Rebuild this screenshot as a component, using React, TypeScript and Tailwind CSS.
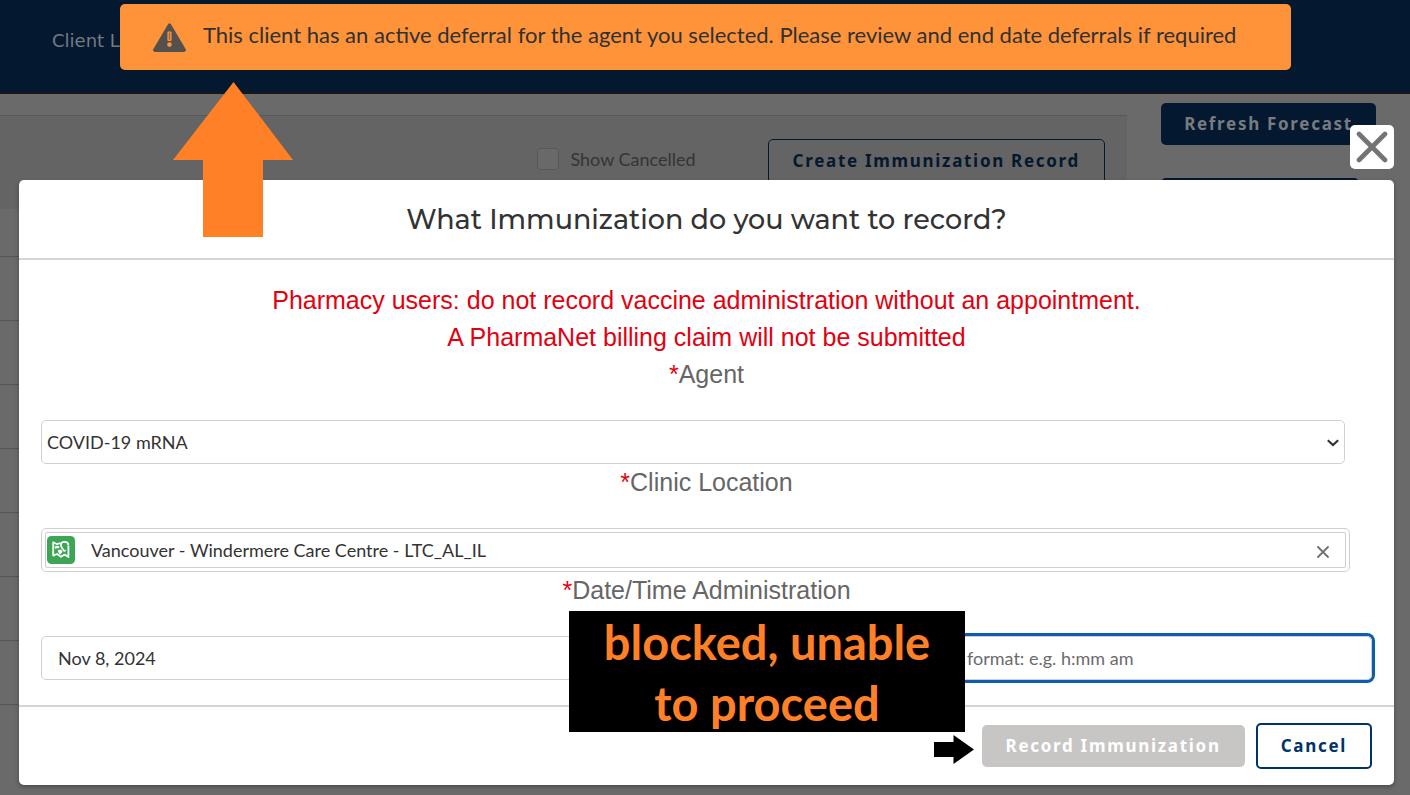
import React from "react";

const rows = ["a", "b", "c", "d", "e", "f", "g"];

function Background() {
  return (
    <div className="flex min-h-screen flex-col bg-[#6a6a6a]">
      <header className="flex h-[94px] items-center border-b-2 border-[#1a1718] bg-[#04182f] pb-[10px] pl-[52px]">
        <a href="#clients" className="font-['DejaVu_Sans',sans-serif] text-lg text-[#757b84]">
          Client List
        </a>
      </header>
      <div className="flex flex-1">
        <main className="min-w-0 flex-1 pt-[21px]">
          <div className="flex h-[94px] items-start justify-end border-t border-[#585858] bg-[#646464] pt-[23px] pr-[22px]">
            <label className="mt-2 mr-[72px] flex items-center gap-[11px] text-lg leading-6 text-[#343434]">
              <input
                type="checkbox"
                className="size-[22px] appearance-none rounded-sm border border-[#585858] bg-[#696969]"
              />
              Show Cancelled
            </label>
            <button
              type="button"
              className="h-[46px] rounded-[5px] border border-[#04182f] px-6 pb-[2px] font-['Noto_Sans',sans-serif] text-[17px] font-bold tracking-widest text-[#04182f]"
            >
              Create Immunization Record
            </button>
          </div>
          <div className="h-12 border-b border-[#565656]" />
          {rows.map((row) => (
            <div key={row} className="h-16 border-b border-[#565656]" />
          ))}
        </main>
        <aside className="flex w-[283px] flex-col items-start gap-[33px] pt-[9px] pl-[34px]">
          <button
            type="button"
            className="h-[42px] w-[215px] rounded-[5px] bg-[#04182f] font-['Noto_Sans',sans-serif] text-[17px] font-bold tracking-widest text-[#787b7f]"
          >
            Refresh Forecast
          </button>
          <div className="h-[42px] w-[198px] rounded-[5px] bg-[#04182f]" />
        </aside>
      </div>
    </div>
  );
}

function Toast() {
  return (
    <div
      role="alert"
      className="absolute top-1 right-[119px] left-[120px] flex h-[66px] items-center gap-[17px] rounded-[5px] bg-[#ff9339] pl-[33px]"
    >
      <svg width="33" height="29" viewBox="0 0 33 29" className="shrink-0">
        <path
          d="M15.2 1.1 Q16.5 -.7 17.8 1.1 L32.6 26.1 Q33.5 28.4 31.2 29 H1.8 Q-.5 28.4 .4 26.1 Z"
          fill="#54504d"
        />
        <rect x="14.4" y="8.4" width="4.2" height="9.6" rx="1" fill="#ff9339" />
        <rect x="15.8" y="9.6" width="1.4" height="7.2" fill="#8a6a4c" />
        <circle cx="16.5" cy="21.6" r="2.3" fill="#ff9339" />
      </svg>
      <p className="pb-1 text-[22px] leading-8 text-[#2f3132]">
        This client has an active deferral for the agent you selected. Please review and end date deferrals if required
      </p>
    </div>
  );
}

function FieldLabel({ htmlFor, children }: { htmlFor: string; children: React.ReactNode }) {
  return (
    <label
      htmlFor={htmlFor}
      className="mb-[27px] block text-center font-['Liberation_Sans',sans-serif] text-[25px] leading-[37px] text-[#666]"
    >
      <span className="text-[#e3000f]">*</span>
      {children}
    </label>
  );
}

function Dialog() {
  return (
    <div className="absolute inset-0 flex flex-col pt-[125px] pr-4 pl-[19px]">
      <button
        type="button"
        aria-label="Close"
        className="mb-[11px] flex size-11 shrink-0 items-center justify-center self-end rounded-[5px] bg-white"
      >
        <svg width="32" height="32" viewBox="0 0 32 32" stroke="#747474" strokeWidth="4.6" strokeLinecap="round">
          <path d="M3 3 L29 29 M29 3 L3 29" />
        </svg>
      </button>
      <section
        role="dialog"
        aria-labelledby="dialog-title"
        className="rounded-[5px] bg-white shadow-[0_2px_4px_rgba(0,0,0,0.3)]"
      >
        <div className="flex h-20 items-center justify-center border-b-2 border-[#d4d4d4]">
          <h1
            id="dialog-title"
            className="pt-[2px] font-['Montserrat','Inter',sans-serif] text-[27px] leading-9 font-medium text-[#333]"
          >
            What Immunization do you want to record?
          </h1>
        </div>
        <form className="px-[22px] pt-[22px] pb-[25px]" onSubmit={(e) => e.preventDefault()}>
          <p className="text-center font-['Liberation_Sans',sans-serif] text-[25px] leading-[37px] text-[#e3000f]">
            Pharmacy users: do not record vaccine administration without an appointment.
            <br />A PharmaNet billing claim will not be submitted
          </p>

          <FieldLabel htmlFor="agent">Agent</FieldLabel>
          <div className="relative mr-[27px]">
            <select
              id="agent"
              className="block h-11 w-full appearance-none rounded-[5px] border border-[#d0d0d0] bg-white pl-[5px] text-lg text-[#333]"
            >
              <option>COVID-19 mRNA</option>
            </select>
            <svg
              width="12"
              height="8"
              viewBox="0 0 12 8"
              fill="none"
              stroke="#333"
              strokeWidth="2.2"
              className="pointer-events-none absolute top-[19px] right-[6px]"
            >
              <path d="M.8 1.2 L6 6 L11.2 1.2" />
            </svg>
          </div>

          <FieldLabel htmlFor="clinic">Clinic Location</FieldLabel>
          <div className="mr-[22px] h-11 rounded-[5px] border border-[#d0d0d0] p-[3px]">
            <div className="flex h-9 items-center rounded-xs border border-[#cfcfcf] pr-[16px] pl-px">
              <svg width="28" height="28" viewBox="0 0 28 28" className="shrink-0">
                <rect width="28" height="28" rx="4.5" fill="#3ba755" />
                <path
                  d="M13.4 7 L10 8.2 L6.2 6.2 V19.6 L10 18 L14 20.8 L17.6 18.6 L21.4 21 V9.4"
                  fill="none"
                  stroke="#fff"
                  strokeWidth="1.8"
                  strokeLinejoin="round"
                />
                <path
                  d="M17.4 15.2 C15.6 12.8 13.9 11.2 13.9 9.2 C13.9 7.2 15.4 5.9 17.5 5.9 C19.6 5.9 21.3 7.2 21.3 9.2"
                  fill="none"
                  stroke="#fff"
                  strokeWidth="1.8"
                />
                <path d="M7.4 10.4 L10 9.8 L12.6 10.6 L11.6 12.4 L9.8 12 L8.6 13.2 Z" fill="#fff" />
                <path d="M10.6 14.4 L13 13.4 L15.4 14.6 L15 16.8 L13 18.6 L11.6 16.8 Z" fill="#fff" />
                <path d="M17.2 15.4 L18.8 14.2" stroke="#fff" strokeWidth="1.2" />
              </svg>
              <input
                id="clinic"
                type="text"
                defaultValue="Vancouver - Windermere Care Centre - LTC_AL_IL"
                className="min-w-0 flex-1 pl-4 text-lg text-[#333] outline-none"
              />
              <button type="button" aria-label="Clear clinic location" className="mt-[3px]">
                <svg width="12" height="12" viewBox="0 0 12 12" stroke="#707070" strokeWidth="1.8" strokeLinecap="round">
                  <path d="M1 1 L11 11 M11 1 L1 11" />
                </svg>
              </button>
            </div>
          </div>

          <FieldLabel htmlFor="date">Date/Time Administration</FieldLabel>
          <div className="flex gap-3">
            <input
              id="date"
              type="text"
              defaultValue="Nov 8, 2024"
              className="h-11 min-w-0 flex-1 rounded-[5px] border border-[#d0d0d0] px-4 text-lg text-[#333]"
            />
            <input
              type="text"
              aria-label="Time"
              placeholder="format: e.g. h:mm am"
              className="h-11 w-[422px] rounded-[5px] border border-[#d0d0d0] px-4 text-lg text-[#333] shadow-[0_0_0_3px_#0d5cad] outline-none placeholder:text-[#6b6b6b]"
            />
          </div>
        </form>
        <footer className="flex h-20 items-center justify-end gap-[11px] border-t-2 border-[#d4d4d4] pr-[22px]">
          <button
            type="button"
            disabled
            className="h-[42px] rounded-[5px] bg-[#c8c6c5] px-6 font-['Noto_Sans',sans-serif] text-[17px] font-bold tracking-widest text-white"
          >
            Record Immunization
          </button>
          <button
            type="button"
            className="h-[46px] rounded-[5px] border-2 border-[#003366] px-[23px] font-['Noto_Sans',sans-serif] text-[17px] font-bold tracking-widest text-[#003366]"
          >
            Cancel
          </button>
        </footer>
      </section>
    </div>
  );
}

function Annotations() {
  return (
    <>
      <svg width="120" height="155" viewBox="0 0 120 155" fill="#ff8026" className="absolute top-[82px] left-[173px]">
        <path d="M60.5 0 L120 78 H90 V155 H30 V78 H0 Z" />
      </svg>
      <p className="absolute top-[611px] left-[569px] h-[121px] w-[396px] bg-black pt-px text-center text-[47px] leading-[61px] font-bold text-[#ff8026]">
        blocked, unable
        <br />
        to proceed
      </p>
      <svg width="40" height="29" viewBox="0 0 40 29" className="absolute top-[735px] left-[934px]">
        <path d="M0 7 H19.5 V0 L40 14.5 L19.5 29 V22 H0 Z" />
      </svg>
    </>
  );
}

export default function App() {
  return (
    <div className="relative h-screen overflow-hidden font-['Lato',sans-serif]">
      <Background />
      <Dialog />
      <Toast />
      <Annotations />
    </div>
  );
}
